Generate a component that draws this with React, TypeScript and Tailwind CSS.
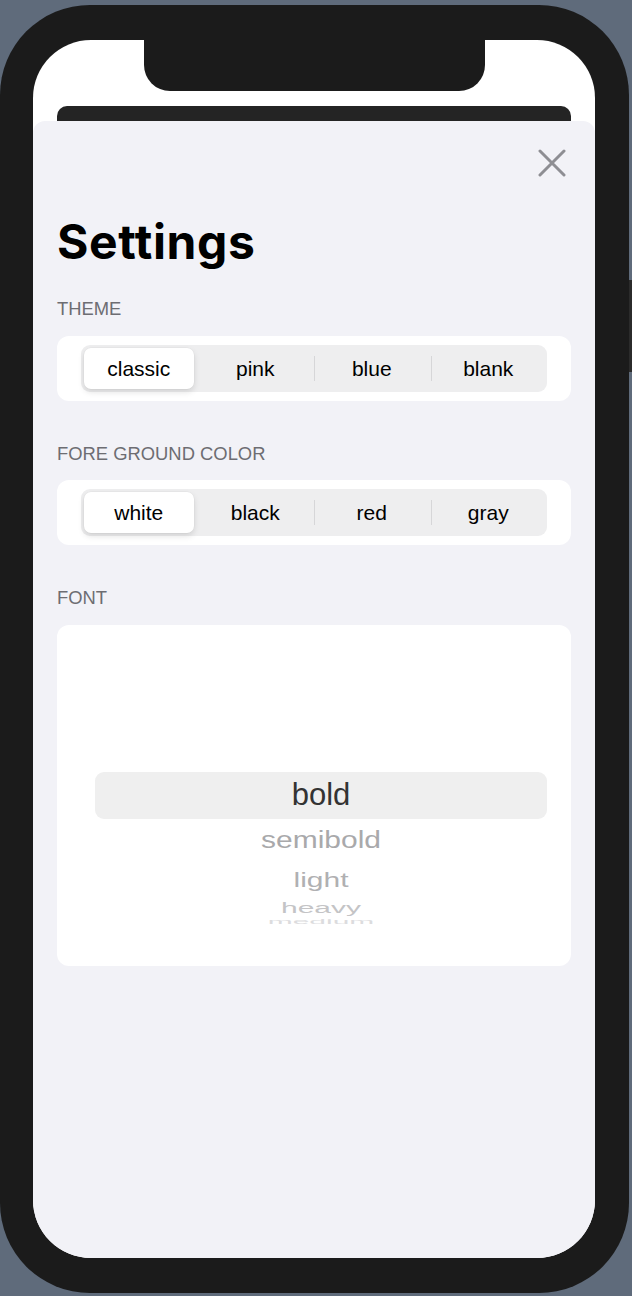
import React from "react";

const themes = ["classic", "pink", "blue", "blank"];
const colors = ["white", "black", "red", "gray"];

// wheel rows under the selection: height, vertical squash, colour
const wheel = [
  { label: "semibold", h: "h-[42px]", squash: "scale-y-[0.8]", color: "text-[#a9a9ab]" },
  { label: "light", h: "h-[38px]", squash: "scale-y-[0.7]", color: "text-[#b0b0b2]" },
  { label: "heavy", h: "h-[18px]", squash: "scale-y-[0.46]", color: "text-[#c4c4c6]" },
  { label: "medium", h: "h-[10px]", squash: "scale-y-[0.22]", color: "text-[#dcdcde]" },
];

function Segmented({ items }: { items: string[] }) {
  return (
    <div className="flex h-[65px] items-center rounded-[12px] bg-white px-[24px]">
      <div className="flex h-[47px] w-full items-center rounded-[9px] bg-[#eeeeef]">
        {items.map((item, i) => (
          <React.Fragment key={item}>
            {i > 1 && <div className="-mr-px h-[25px] w-px bg-[#d6d6d8]" />}
            <div className="flex h-full flex-1 p-[3px] pr-[4px]">
              <div
                className={
                  i === 0
                    ? "flex flex-1 items-center justify-center rounded-[7px] bg-white pt-px text-[21px] text-black shadow-[0_3px_6px_rgba(0,0,0,0.12),0_0_0_0.5px_rgba(0,0,0,0.04)]"
                    : "flex flex-1 items-center justify-center pt-px text-[21px] text-black"
                }
              >
                {item}
              </div>
            </div>
          </React.Fragment>
        ))}
      </div>
    </div>
  );
}

function Label({ children, className }: { children: React.ReactNode; className: string }) {
  return (
    <div className={"h-[22px] text-[18.4px] leading-[22px] text-[#6d6d72] " + className}>{children}</div>
  );
}

export default function App() {
  return (
    <div className="h-[1296px] w-[632px] overflow-hidden bg-[#5f6b7b] pt-[5px] font-['Liberation_Sans',Arial,sans-serif]">
      <div className="relative h-[1288px] w-[629px] rounded-[90px] bg-[#1b1b1b] pb-[35px] pl-[33px] pr-[34px] pt-[35px]">
        {/* side button */}
        <div className="absolute right-[-3px] top-[275px] h-[92px] w-[3px] bg-[#2b2b2b]" />

        <div className="flex h-full flex-col overflow-hidden rounded-[58px] bg-white">
          <div className="flex justify-center">
            <div className="h-[51px] w-[341px] rounded-b-[26px] bg-[#1b1b1b]" />
          </div>
          <div className="mx-[24px] mt-[15px] h-[15px] rounded-t-[10px] bg-[#242424]" />

          <div className="flex flex-1 flex-col rounded-t-[12px] bg-[#f2f2f7] px-[24px]">
            <div className="mt-[28px] flex justify-end pr-[5px]">
              <svg width="28" height="28" viewBox="0 0 28 28">
                <path d="M2 2 L26 26 M26 2 L2 26" stroke="#8e8e93" strokeWidth="3" strokeLinecap="round" />
              </svg>
            </div>

            <h1 className="mt-[41px] h-[48px] font-['Inter',sans-serif] text-[48px] font-bold leading-[48px] tracking-[0.6px] text-black">
              Settings
            </h1>

            <Label className="mb-[16px] mt-[32px]">THEME</Label>
            <Segmented items={themes} />

            <Label className="mb-[15px] mt-[42px]">FORE GROUND COLOR</Label>
            <Segmented items={colors} />

            <Label className="mb-[16px] mt-[42px]">FONT</Label>
            <div className="h-[341px] rounded-[12px] bg-white pl-[38px] pr-[24px] pt-[147px]">
              <div className="flex h-[47px] items-center justify-center rounded-[9px] bg-[#efefef] text-[31px] text-[#333333]">
                bold
              </div>
              {wheel.map((w) => (
                <div key={w.label} className={"flex items-center justify-center overflow-visible " + w.h}>
                  <span className={"block text-[30px] leading-[30px] " + w.squash + " " + w.color}>{w.label}</span>
                </div>
              ))}
            </div>
          </div>
        </div>
      </div>
    </div>
  );
}
